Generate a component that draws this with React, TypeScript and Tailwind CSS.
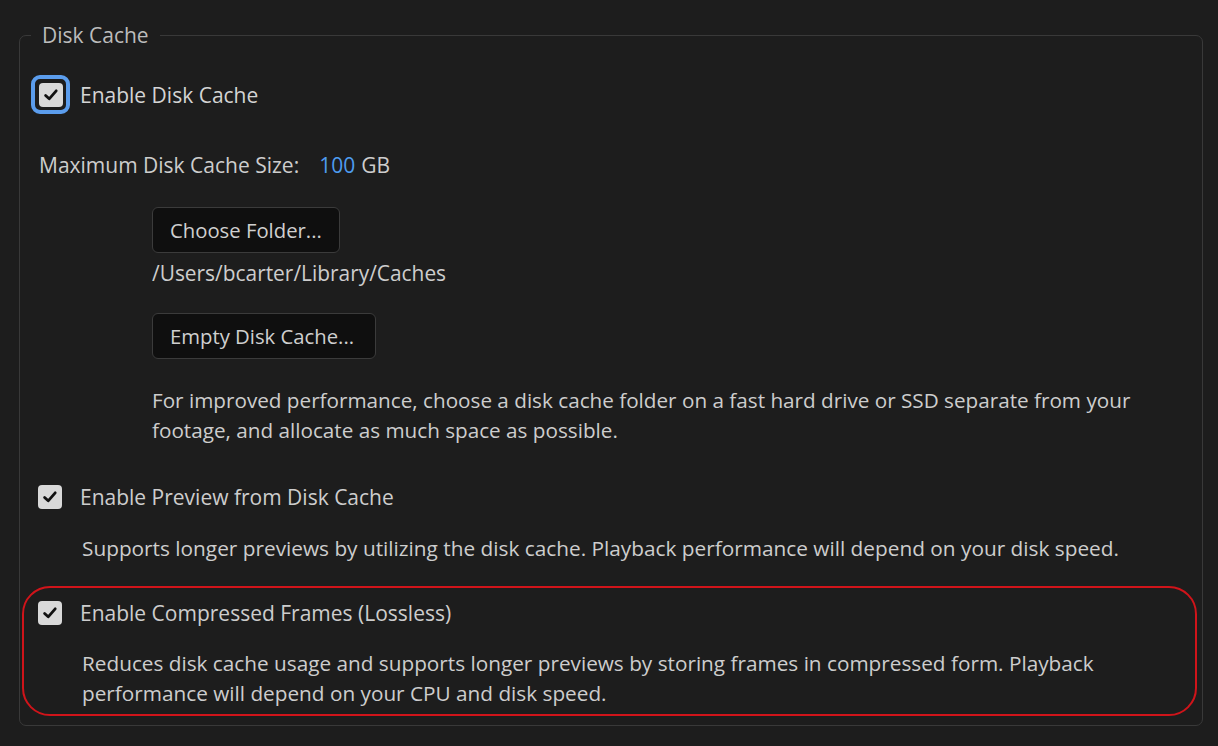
import { ReactNode } from 'react'

function CheckBox({ focused = false }: { focused?: boolean }) {
  const box = (
    <span className="flex h-[24px] w-[24px] items-center justify-center rounded-[4px] bg-[#d9d9d9]">
      <svg width="18" height="18" viewBox="0 0 18 18" fill="none">
        <path d="M3.6 9.4 L7.2 12.8 L14.2 4.8" stroke="#111" strokeWidth="2.8" strokeLinecap="round" strokeLinejoin="round" />
      </svg>
    </span>
  )
  if (!focused) return box
  return (
    <span className="flex h-[39px] w-[39px] items-center justify-center rounded-[9px] border-[4px] border-[#5b9ded] bg-[#1d1d1d]">
      {box}
    </span>
  )
}

function Button({ children, wide = false }: { children: ReactNode; wide?: boolean }) {
  return (
    <button
      className={`flex h-[46px] items-center rounded-[6px] border border-[#3b3b3b] bg-[#0f0f0f] text-[20.3px] text-[#cfcfcf] ${wide ? 'pl-[17px] pr-[21px]' : 'px-[17px]'}`}
    >
      {children}
    </button>
  )
}

export default function App() {
  return (
    <div
      className="h-[746px] w-[1218px] overflow-hidden bg-[#1d1d1d] pl-[19px] pr-[15px] pt-[21px] text-[#cdcdcd]"
      style={{ fontFamily: '"Open Sans", Lato, sans-serif' }}
    >
      <fieldset className="rounded-[7px] border border-[#393939] pb-[9px] pl-[11px] pr-[5px] pt-0">
        <legend className="px-[11px] text-[21px] leading-[28px] text-[#bcbcbc]">Disk Cache</legend>

        {/* Enable Disk Cache */}
        <div className="mt-[26px] flex items-center gap-[10px]">
          <CheckBox focused />
          <span className="text-[21px] leading-[30px] text-[#d4d4d4]">Enable Disk Cache</span>
        </div>

        <div className="mt-[36px] pl-[8px] text-[21px] leading-[30px]">
          Maximum Disk Cache Size:
          <span className="ml-[20px] text-[#4e9cf0]">100</span>
          <span className="ml-[6px]">GB</span>
        </div>

        <div className="ml-[121px] flex flex-col items-start">
          <div className="mt-[27px]">
            <Button>Choose Folder...</Button>
          </div>
          <div className="mt-[5px] text-[20.9px] leading-[30px]">/Users/bcarter/Library/Caches</div>
          <div className="mt-[25px]">
            <Button wide>Empty Disk Cache...</Button>
          </div>
          <p className="mt-[26px] whitespace-nowrap text-[20.7px] leading-[30px]">
            For improved performance, choose a disk cache folder on a fast hard drive or SSD separate from your
            <br />
            footage, and allocate as much space as possible.
          </p>
        </div>

        {/* Enable Preview from Disk Cache */}
        <div className="ml-[7px] mt-[37px] flex h-[30px] items-center gap-[18px]">
          <CheckBox />
          <span className="text-[21px] leading-[30px]">Enable Preview from Disk Cache</span>
        </div>
        <p className="ml-[51px] mt-[21px] whitespace-nowrap text-[20.8px] leading-[30px]">
          Supports longer previews by utilizing the disk cache. Playback performance will depend on your disk speed.
        </p>

        {/* Enable Compressed Frames */}
        <div className="-ml-[9px] mt-[23px] rounded-[28px] border-2 border-[#d0141a] pb-[6px] pl-[14px] pt-[12px]">
          <div className="flex h-[26px] items-center gap-[18px]">
            <CheckBox />
            <span className="text-[21px] leading-[30px]">Enable Compressed Frames (Lossless)</span>
          </div>
          <p className="ml-[44px] mt-[22px] whitespace-nowrap text-[20.75px] leading-[30px]">
            Reduces disk cache usage and supports longer previews by storing frames in compressed form. Playback
            <br />
            performance will depend on your CPU and disk speed.
          </p>
        </div>
      </fieldset>
    </div>
  )
}
